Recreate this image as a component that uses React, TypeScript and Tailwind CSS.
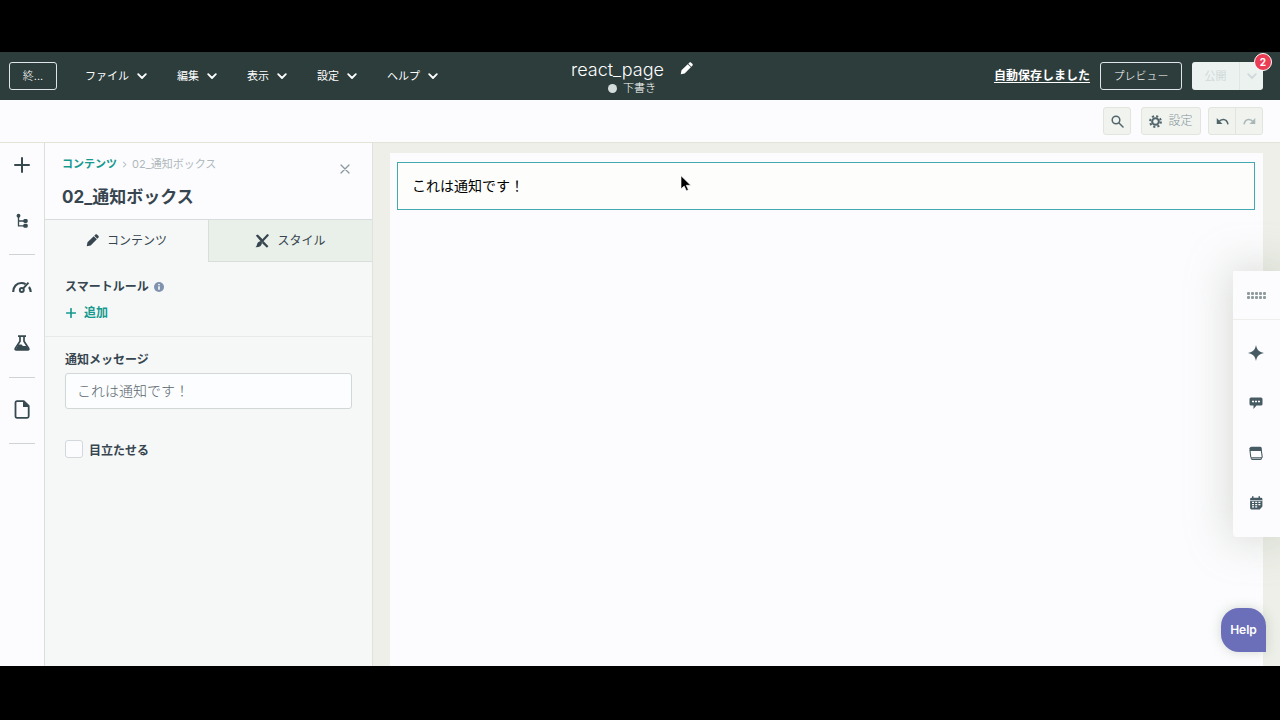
import { useState } from 'react';
import type { ReactNode } from 'react';

function Chevron({ className = '' }: { className?: string }) {
  return (
    <svg viewBox="0 0 10 10" width="10" height="10" fill="none" stroke="currentColor" strokeWidth="1.8" strokeLinecap="round" strokeLinejoin="round" className={className} aria-hidden="true">
      <path d="M1.2 3.2 5 7l3.8-3.8" />
    </svg>
  );
}

function Pencil({ size }: { size: number }) {
  return (
    <svg viewBox="0 0 14 14" width={size} height={size} fill="currentColor" aria-hidden="true">
      <path d="M.8 13.200l.8-4.200L8.300 2.300l3.400 3.400L5 12.400zM8.900 1.800l1.100-1.100c.6-.6 1.400-.6 2 0l1.300 1.300c.6.6.6 1.400 0 2l-1.100 1.100z" />
    </svg>
  );
}

function Plus({ size, width }: { size: number; width: number }) {
  return (
    <svg viewBox="0 0 16 16" width={size} height={size} fill="none" stroke="currentColor" strokeWidth={width} strokeLinecap="round" aria-hidden="true">
      <path d="M8 1v14M1 8h14" />
    </svg>
  );
}

function TreeIcon() {
  return (
    <svg viewBox="0 0 16 18" width="14" height="18" fill="none" stroke="currentColor" strokeWidth="1.500" aria-hidden="true">
      <path d="M4 3v11.500h7M4 9h7" />
      <g fill="currentColor" stroke="none">
        <circle cx="4" cy="3" r="2.200" />
        <rect x="9.500" y="6.700" width="5" height="4.600" rx="1.600" />
        <rect x="9.500" y="12.200" width="5" height="4.600" rx="1.600" />
      </g>
    </svg>
  );
}

function GaugeIcon() {
  return (
    <svg viewBox="0 0 20 14" width="20" height="14" fill="none" stroke="currentColor" strokeWidth="2.200" aria-hidden="true">
      <path d="M1.200 12c0-5.500 3.500-9 8-9 1.700 0 3.200.4 4.400 1.200M17 7c1 1.400 1.600 3 1.700 5" />
      <circle cx="9.800" cy="10" r="2" strokeWidth="1.900" />
      <path d="m11 8.600 5.500-6" strokeWidth="2" />
    </svg>
  );
}

function FlaskIcon() {
  return (
    <svg viewBox="0 0 16 16" width="16" height="16" aria-hidden="true">
      <path d="M4 1.200h8M6 1.500v4.800L1.300 13.500q-.6 1.300.9 1.300h11.600q1.500 0 .9-1.300L10 6.300V1.500" fill="none" stroke="currentColor" strokeWidth="1.700" />
      <path d="M4.500 9.500h3l1.500 1.500h3.500l2 3.500H1.700z" fill="currentColor" />
    </svg>
  );
}

function FileIcon() {
  return (
    <svg viewBox="0 0 16 19" width="16" height="19" aria-hidden="true">
      <path d="M3 1.200h6.800L14.700 6v10.300q0 1.500-1.500 1.500H3q-1.500 0-1.500-1.500V2.700Q1.500 1.200 3 1.200z" fill="none" stroke="currentColor" strokeWidth="1.800" strokeLinejoin="round" />
      <path d="M9 1v6h6z" fill="currentColor" />
    </svg>
  );
}

function GearIcon() {
  return (
    <svg viewBox="0 0 14 14" width="13" height="13" fill="none" stroke="currentColor" aria-hidden="true">
      <circle cx="7" cy="7" r="3.600" strokeWidth="2.200" />
      <circle cx="7" cy="7" r="5.800" strokeWidth="2.200" strokeDasharray="2.280 2.275" />
    </svg>
  );
}

function UndoIcon({ flip = false }: { flip?: boolean }) {
  return (
    <svg viewBox="0 0 14 10" width="13" height="10" className={flip ? '-scale-x-100' : ''} aria-hidden="true">
      <path d="M3 6C5.500 2.600 11 2 12.800 8" fill="none" stroke="currentColor" strokeWidth="1.600" strokeLinecap="round" />
      <path d="M.8 1.800v6.400h6.200z" fill="currentColor" />
    </svg>
  );
}

function StyleIcon() {
  return (
    <svg viewBox="0 0 14 14" width="14" height="14" aria-hidden="true">
      <path d="M.8 1.400 2.800.4l5 5.200-2 1.800-4-4.600zM8.400 7l5 5.200-1.500 1.500-5-4.800z" fill="currentColor" />
      <path d="M12.600 1.200 6.500 7.700" stroke="currentColor" strokeWidth="2.200" strokeLinecap="round" />
      <path d="M5.300 7.300 7 9c-.3 2.800-2.400 4.400-6.400 4.300C2 12 1.700 11 2.300 9.600c.5-1.300 1.700-2.200 3-2.300z" fill="currentColor" />
    </svg>
  );
}

function Rule() {
  return <div className="mx-auto h-px w-[26px] bg-[#cfd4d2]" />;
}

function RailButton({ label, children }: { label: string; children: ReactNode }) {
  return (
    <button aria-label={label} className="flex h-8 w-full items-center justify-center text-[#364a50]">
      {children}
    </button>
  );
}

const menus = ['ファイル', '編集', '表示', '設定', 'ヘルプ'];

function Header() {
  return (
    <header className="grid h-12 grid-cols-[1fr_auto_1fr] items-center bg-[#2c3d3c] text-white">
      <div className="flex items-center pl-[9px]">
        <button className="h-7 w-12 rounded-[3px] border border-[#dfe5ea] text-[11px] font-light">終...</button>
        <nav className="ml-7 flex gap-[30px]">
          {menus.map((menu) => (
            <button key={menu} className="flex items-center gap-2 text-[11px] whitespace-nowrap">
              {menu}
              <Chevron />
            </button>
          ))}
        </nav>
      </div>
      <div className="mr-4 flex flex-col items-center">
        <div className="flex items-center gap-4 pt-[2px]">
          <h1 className="text-lg leading-[22px] font-light">react_page</h1>
          <button aria-label="名前を編集" className="pb-1">
            <Pencil size={13} />
          </button>
        </div>
        <p className="flex items-center gap-[6px] text-[11px] leading-[14px] font-light">
          <span className="size-[9px] rounded-full bg-[#d5dcdc]" />
          下書き
        </p>
      </div>
      <div className="flex items-center justify-end pr-[17px]">
        <a href="#saved" className="mr-[10px] text-xs font-bold whitespace-nowrap underline underline-offset-2">自動保存しました</a>
        <button className="mr-[10px] h-7 w-[82px] rounded-[3px] border border-[#dfe5ea] text-[11px] font-light">プレビュー</button>
        <div className="relative flex h-7 w-[71px] rounded-[3px] bg-[#ecf2f0] text-[#d0d8da]">
          <button className="flex-1 text-[11px]">公開</button>
          <button aria-label="公開オプション" className="flex w-6 items-center justify-center border-l border-[#dfe6e6]">
            <Chevron />
          </button>
          <span className="absolute -top-[9px] -right-[9px] flex size-[18px] items-center justify-center rounded-full border border-white bg-[#ea3d55] text-[10px] font-bold text-white">2</span>
        </div>
      </div>
    </header>
  );
}

function Toolbar() {
  return (
    <div className="flex h-[43px] items-center justify-end gap-[10px] border-b border-[#e2e4d8] bg-[#fcfcfe] pr-[17px] text-[#53656c]">
      <button aria-label="検索" className="flex size-7 items-center justify-center rounded-[3px] border border-[#e0e5de] bg-[#f0f3ee]">
        <svg viewBox="0 0 13 13" width="13" height="13" fill="none" stroke="currentColor" strokeWidth="1.500" strokeLinecap="round" aria-hidden="true">
          <circle cx="5" cy="5" r="3.800" />
          <path d="m8 8 4 4" />
        </svg>
      </button>
      <button className="flex h-7 w-[60px] items-center justify-center gap-[6px] rounded-[3px] border border-[#e0e5de] bg-[#f0f3ee] text-xs">
        <GearIcon />
        <span className="font-light text-[#84939c]">設定</span>
      </button>
      <div className="-ml-[3px] flex h-7 w-[55px] rounded-[3px] border border-[#e0e5de] bg-[#f0f3ee]">
        <button aria-label="元に戻す" className="flex flex-1 items-center justify-center border-r border-[#e0e5de]">
          <UndoIcon />
        </button>
        <button aria-label="やり直す" className="flex flex-1 items-center justify-center text-[#aab7b9]">
          <UndoIcon flip />
        </button>
      </div>
    </div>
  );
}

function Rail() {
  return (
    <nav className="flex w-[45px] shrink-0 flex-col border-r border-[#dbdfdc] bg-[#fcfcfe] pt-[6px]">
      <RailButton label="追加"><Plus size={16} width={2} /></RailButton>
      <div className="h-6" />
      <RailButton label="コンテンツツリー"><TreeIcon /></RailButton>
      <div className="h-[17px]" />
      <Rule />
      <div className="h-4" />
      <RailButton label="最適化"><GaugeIcon /></RailButton>
      <div className="h-6" />
      <RailButton label="テスト"><FlaskIcon /></RailButton>
      <div className="h-[18px]" />
      <Rule />
      <div className="h-[15px]" />
      <RailButton label="ファイル"><FileIcon /></RailButton>
      <div className="h-[18px]" />
      <Rule />
    </nav>
  );
}

function Panel() {
  const [message, setMessage] = useState('これは通知です！');
  const [emphasis, setEmphasis] = useState(false);
  return (
    <aside className="flex w-[328px] shrink-0 flex-col border-r border-[#dfe2e0] bg-[#f5f8f7] text-[#36454f]">
      <div className="relative h-[77px] border-b border-[#d8dcde] bg-[#fcfcfe] pt-[13px] pl-[17px]">
        <div className="flex items-center gap-[5px] text-[11px] leading-4">
          <a href="#contents" className="font-bold text-[#16998f]">コンテンツ</a>
          <svg viewBox="0 0 5 8" width="5" height="7" fill="none" stroke="#b6c0c2" strokeWidth="1.200" aria-hidden="true">
            <path d="m1 1 3 3-3 3" />
          </svg>
          <span className="text-[#aeb8bc]">02_通知ボックス</span>
        </div>
        <h2 className="mt-[13px] text-[17px] leading-6 font-bold">02_通知ボックス</h2>
        <button aria-label="閉じる" className="absolute top-[21px] right-[22px] text-[#8a98a0]">
          <svg viewBox="0 0 10 10" width="10" height="10" stroke="currentColor" strokeWidth="1.300" strokeLinecap="round" aria-hidden="true">
            <path d="m1 1 8 8M9 1 1 9" />
          </svg>
        </button>
      </div>
      <div role="tablist" className="flex h-[42px] text-xs">
        <button role="tab" aria-selected="true" className="flex flex-1 items-center justify-center gap-2 pb-px">
          <Pencil size={13} />
          コンテンツ
        </button>
        <button role="tab" aria-selected="false" className="flex flex-1 items-center justify-center gap-2 border-b border-l border-[#d8dfda] bg-[#e9efe9]">
          <StyleIcon />
          スタイル
        </button>
      </div>
      <section className="h-[75px] border-b border-[#e7e9ea] px-5 pt-4">
        <h3 className="flex items-center gap-[5px] text-xs leading-[18px] font-bold">
          スマートルール
          <svg viewBox="0 0 10 10" width="10" height="10" aria-hidden="true">
            <circle cx="5" cy="5" r="5" fill="#8092ae" />
            <path d="M5 4.300v3.500M5 2v1.300" stroke="#fff" strokeWidth="1.500" />
          </svg>
        </h3>
        <button className="mt-2 flex items-center gap-2 pl-px text-xs leading-[18px] font-bold text-[#16998f]">
          <Plus size={10} width={2.6} />
          追加
        </button>
      </section>
      <section className="px-5 pt-[14px]">
        <label htmlFor="message" className="block text-xs leading-[18px] font-bold">通知メッセージ</label>
        <input id="message" value={message} onChange={(e) => setMessage(e.target.value)} className="mt-1 block h-9 w-full rounded-[3px] border border-[#d2d7d8] bg-[#fcfdfe] px-[11px] pb-[2px] text-sm font-light text-[#59666c]" />
        <div className="mt-[31px] flex items-start gap-[6px]">
          <input id="emphasis" type="checkbox" checked={emphasis} onChange={(e) => setEmphasis(e.target.checked)} className="size-[18px] appearance-none rounded-[3px] border border-[#d3d8dc] bg-[#fcfcfe] checked:bg-[#16998f]" />
          <label htmlFor="emphasis" className="pt-[2px] text-xs leading-[18px] font-bold">目立たせる</label>
        </div>
      </section>
    </aside>
  );
}

function SideTools() {
  return (
    <div className="absolute top-[128px] right-0 flex w-[47px] flex-col items-center rounded-bl bg-[#fcfcfe] text-[#465b63] shadow-[0_0_40px_6px_rgba(160,170,150,0.35)]">
      <button aria-label="移動" className="flex h-[49px] w-full items-center justify-center border-b border-[#ecefea] pr-px">
        <svg viewBox="0 0 19 7" width="19" height="7" fill="#8f9c9c" aria-hidden="true">
          {[0, 4, 8, 12, 16].map((x) => (
            <g key={x}>
              <rect x={x} y="0" width="3" height="3" rx="1" />
              <rect x={x} y="4" width="3" height="3" rx="1" />
            </g>
          ))}
        </svg>
      </button>
      <div className="flex w-full flex-col pt-2 pr-[2px] pb-[9px]">
        <button aria-label="アシスタント" className="flex h-[50px] items-center justify-center">
          <svg viewBox="0 0 16 16" width="16" height="16" fill="currentColor" aria-hidden="true">
            <path d="M8 0c1 5 3 7 8 8-5 1-7 3-8 8-1-5-3-7-8-8 5-1 7-3 8-8z" />
          </svg>
        </button>
        <button aria-label="コメント" className="flex h-[50px] items-center justify-center">
          <svg viewBox="0 0 14 12" width="14" height="12" aria-hidden="true">
            <path d="M2 .5h10q1.500 0 1.500 1.500v5Q13.500 8.500 12 8.500H7.500L4.500 12V8.500H2Q.5 8.500.5 7V2Q.5.5 2 .5z" fill="currentColor" />
            <path d="M3 4.500h2M6 4.500h2M9 4.500h2" stroke="#fff" strokeWidth="1.500" />
          </svg>
        </button>
        <button aria-label="プレビュー画面" className="flex h-[50px] items-center justify-center">
          <svg viewBox="0 0 14 14" width="14" height="14" aria-hidden="true">
            <path d="M1 4.500l.7 6.200q.1 1 1 1h9.500q1.100 0 1-1L12.300 4.500M2 12.200q.3 1.200 1.500 1.200h7.500q1.200 0 1.700-1.200" fill="none" stroke="currentColor" strokeWidth="1.100" />
            <path d="M2.500.8h8.500q1.500 0 1.700 1.200l.3 3H.5V2.300Q.7.8 2.500.8z" fill="currentColor" />
          </svg>
        </button>
        <button aria-label="カレンダー" className="flex h-[50px] items-center justify-center">
          <svg viewBox="0 0 14 14" width="14" height="14" aria-hidden="true">
            <path d="M3 .3h1.500v1.400h5V.3H11v1.400h1q1.400 0 1.400 1.400v7.500L10.700 13.500H2.500q-1.400 0-1.400-1.400V3.100Q1 1.700 3 1.700z" fill="currentColor" />
            <path d="M3 6.300h2M6.200 6.300h2M9.400 6.300h2M3 8.600h2M6.200 8.600h2M9.400 8.600h2M3 10.900h2M6.200 10.900h2" stroke="#fff" strokeWidth="1.200" />
            <path d="M.8 4.600h12.800" stroke="#fff" strokeWidth=".7" />
          </svg>
        </button>
      </div>
    </div>
  );
}

export default function App() {
  return (
    <div className="flex min-h-screen flex-col bg-black pt-[52px] pb-[54px] font-[Inter,'Noto_Sans_CJK_JP',sans-serif]">
      <Header />
      <Toolbar />
      <div className="relative flex grow">
        <Rail />
        <Panel />
        <main className="flex grow bg-[#edefe8] pt-[10px] pr-[17px] pl-[17px]">
          <div className="grow bg-[#fcfcfe] pt-[9px] pr-2 pl-[7px]">
            <div className="flex h-12 items-center border border-[#42a9b0] bg-[#fdfdfb] px-[14px] text-sm text-black">これは通知です！</div>
          </div>
        </main>
        <SideTools />
        <button className="absolute right-[14px] bottom-[14px] h-11 w-[45px] rounded-[18px] rounded-br-none bg-[#6b6fb9] text-xs font-semibold text-white shadow-[0_0_12px_rgba(150,160,140,0.4)]">Help</button>
        <svg viewBox="0 0 12 17" width="12" height="17" className="absolute top-[32px] left-[680px]" aria-hidden="true">
          <path d="M1 .8v13l3.200-2.700 2.200 4.600 2-.9-2.200-4.500h4.500z" fill="#000" stroke="#fff" strokeWidth=".6" />
        </svg>
      </div>
    </div>
  );
}
